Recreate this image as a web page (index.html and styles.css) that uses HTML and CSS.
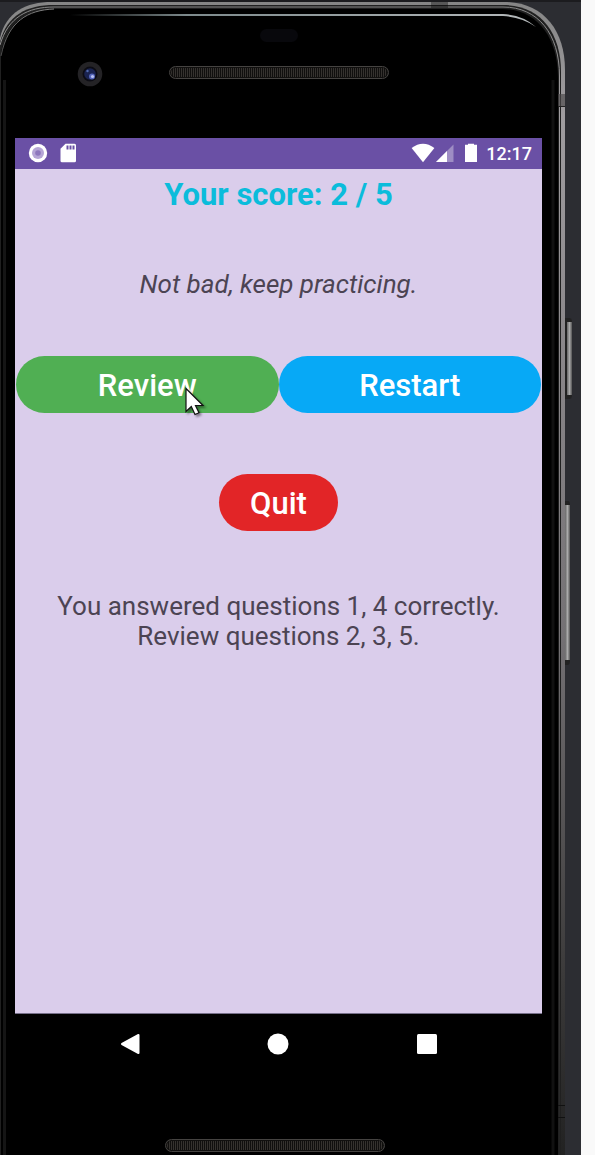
FILE: index.html
```html
<!DOCTYPE html>
<html lang="en">
<head>
<meta charset="utf-8">
<meta name="viewport" content="width=device-width, initial-scale=1">
<title>Quiz results</title>
<link rel="stylesheet" href="styles.css">
</head>
<body>
<div class="stage">
  <svg class="frame" viewBox="0 0 595 1155" preserveAspectRatio="none" aria-hidden="true">
    <defs>
      <linearGradient id="metal" gradientUnits="userSpaceOnUse" x1="0" y1="0" x2="0" y2="1155">
        <stop offset="0" stop-color="#858585"/>
        <stop offset=".1" stop-color="#a09da0"/>
        <stop offset=".3" stop-color="#8a878a"/>
        <stop offset=".55" stop-color="#747174"/>
        <stop offset=".85" stop-color="#3a3939"/>
        <stop offset="1" stop-color="#222"/>
      </linearGradient>
      <linearGradient id="fade" gradientUnits="userSpaceOnUse" x1="0" y1="0" x2="0" y2="130">
        <stop offset="0" stop-color="#888"/>
        <stop offset=".3" stop-color="#666"/>
        <stop offset=".6" stop-color="#222"/>
        <stop offset="1" stop-color="#0a0a0a"/>
      </linearGradient>
      <linearGradient id="shine" gradientUnits="userSpaceOnUse" x1="70" y1="0" x2="536" y2="0">
        <stop offset="0" stop-color="#000"/>
        <stop offset=".25" stop-color="#7d8a8c"/>
        <stop offset="1" stop-color="#b5b9bb"/>
      </linearGradient>
      <linearGradient id="key" x1="0" y1="0" x2="1" y2="0">
        <stop offset="0" stop-color="#666"/>
        <stop offset=".5" stop-color="#aaa"/>
        <stop offset="1" stop-color="#555"/>
      </linearGradient>
    </defs>
    <rect width="581" height="1155" fill="#2c2d32"/>
    <rect width="581" height="2" fill="#1c1c1f"/>
    <path d="M565 318h4q3 0 3 4v73q0 4-3 4h-4z" fill="#222"/>
    <rect x="567" y="322" width="5" height="73" fill="url(#key)"/>
    <path d="M565 501h3q2 0 2 4v156q0 3-2 4h-3z" fill="#222"/>
    <rect x="565" y="505" width="5" height="155" fill="url(#key)"/>
    <path d="M0 1155V38C6 12 26 2 52 2H504C543 2 565 30 565 70V1155z" fill="url(#metal)"/>
    <path d="M0 1155V42C7 15 27 5 54 5H503C540 5 561 32 561 72V1155z" fill="#202020"/>
    <path d="M0 45C8 17 28 7 54 7H503C538 7 559.500 34 559.500 76V1155" fill="none" stroke="url(#metal)"/>
    <path d="M1 1155V52C9 20 28 9 56 9H502C536 9 558 36 558 78V1155z" fill="#000"/>
    <path d="M1 56C8 21 28 10 54 9" fill="none" stroke="url(#fade)"/>
    <path d="M4.500 1155V80" fill="none" stroke="#151515" stroke-width="3"/>
    <path d="M553 80V1155" fill="none" stroke="#111" stroke-width="3"/>
    <path d="M70 14H503Q523 15 536 27Q522 17 503 16H70z" fill="url(#shine)"/>
    <path d="M431 2h17v6h-17z" fill="#000" opacity=".35"/>
    <path d="M558 94h7v13h-7z" fill="#4a4648" opacity=".65"/>
    <path d="M558 106.500h7" stroke="#222"/>
    <path d="M558 1105.500h7M558 1117.500h7" stroke="#111"/>
  </svg>

  <div class="phone">
    <div class="bezel-top">
      <span class="sensor"></span>
      <div class="hardware">
        <svg class="camera" viewBox="0 0 26 26" aria-hidden="true">
          <circle cx="13" cy="13" r="12.300" fill="#242326"/>
          <circle cx="13" cy="13" r="7.500" fill="#0c0c14"/>
          <circle cx="13" cy="13" r="5.800" fill="#1a2350"/>
          <circle cx="10.500" cy="10" r="1.200" fill="#5069b0"/>
          <circle cx="15" cy="15.500" r="3" fill="#5464b8"/>
          <circle cx="15.500" cy="15.500" r="1.600" fill="#b9c2f3"/>
        </svg>
        <span class="grille"></span>
      </div>
    </div>

    <div class="screen">
      <header class="status">
        <svg class="glyph" viewBox="0 0 20 20" aria-hidden="true">
          <circle cx="10" cy="10" r="9.200" fill="#fff"/>
          <circle cx="10" cy="10" r="6" fill="#b5a5d6"/>
          <circle cx="10" cy="10" r="2.800" fill="#8e78bd"/>
        </svg>
        <svg class="glyph" viewBox="0 0 20 20" aria-hidden="true">
          <path d="M7.500 .7H16.500Q18 .7 18 2.200V17.800Q18 19.300 16.500 19.300H4Q2.500 19.300 2.500 17.800V5.700z" fill="#fff"/>
          <path d="M8.500 2.500h2v4h-2zM11.500 2.500h2v4h-2zM14.500 2.500h2v4h-2z" fill="#6a50a5"/>
        </svg>
        <div class="system">
          <svg class="wifi" viewBox="0 0 24 20" aria-hidden="true">
            <path d="M.6 5Q12-3.600 23.400 5L12 19.300z" fill="#fff"/>
          </svg>
          <svg class="glyph" viewBox="0 0 20 20" aria-hidden="true">
            <path d="M1 19 18.500 1.500V19z" fill="#fff" opacity=".35"/>
            <path d="M1 19 12 8V19z" fill="#fff"/>
          </svg>
          <svg class="battery" viewBox="0 0 14 20" aria-hidden="true">
            <path d="M4 .8h6v1h3V19H1V1.800h3z" fill="#fff"/>
          </svg>
          <time class="clock">12:17</time>
        </div>
      </header>

      <main class="results">
        <h1 class="score">Your score: 2 / 5</h1>
        <p class="verdict">Not bad, keep practicing.</p>
        <div class="actions">
          <button class="btn btn-review" type="button">Review<svg class="pointer" viewBox="0 0 24 32" aria-hidden="true"><path d="M2 1.500V24.500L7.300 19.500 11 27.500 15 25.700 11.500 18.500H19z" fill="#fff" stroke="#111" stroke-width="1.200"/></svg></button>
          <button class="btn btn-restart" type="button">Restart</button>
        </div>
        <button class="btn btn-quit" type="button">Quit</button>
        <p class="summary">You answered questions 1, 4 correctly.<br>Review questions 2, 3, 5.</p>
      </main>
    </div>

    <nav class="navbar">
      <button class="nav-key" type="button" aria-label="Back">
        <svg viewBox="0 0 24 24"><path d="M20.500 3V21L4 12z" fill="#fff" stroke="#fff" stroke-width="2" stroke-linejoin="round"/></svg>
      </button>
      <button class="nav-key" type="button" aria-label="Home">
        <svg viewBox="0 0 24 24"><circle cx="12" cy="12" r="10.500" fill="#fff"/></svg>
      </button>
      <button class="nav-key" type="button" aria-label="Overview">
        <svg viewBox="0 0 24 24"><rect x="2" y="2" width="20" height="20" rx="1.500" fill="#fff"/></svg>
      </button>
    </nav>

    <div class="bezel-bottom"><span class="grille"></span></div>
  </div>
</div>
</body>
</html>
```

FILE: styles.css
```css
* {
  box-sizing: border-box;
}

body {
  margin: 0;
  background: #f9f9f9;
  font-family: Roboto, "Liberation Sans", sans-serif;
}

.stage {
  position: relative;
  min-height: 100vh;
  display: flex;
}

.frame {
  position: absolute;
  inset: 0;
  width: 100%;
  height: 100%;
}

.phone {
  position: relative;
  flex: 1;
  display: flex;
  flex-direction: column;
  margin: 0 53px 0 15px;
}

.bezel-top {
  display: flex;
  flex-direction: column;
  align-items: center;
  gap: 19px;
  padding: 29px 0 51px;
}

.sensor {
  width: 38px;
  height: 13px;
  border-radius: 7px;
  background: #08080c;
}

.hardware {
  align-self: stretch;
  display: grid;
  grid-template-columns: 1fr 220px 1fr;
  align-items: center;
}

.camera {
  justify-self: center;
  width: 26px;
  height: 26px;
  margin-right: 4px;
}

.grille {
  width: 220px;
  height: 13px;
  border: 1px solid #454341;
  border-radius: 7px;
  background: repeating-linear-gradient(90deg, #100f0e 0 1px, #35322f 1px 2px);
  box-shadow: inset 0 0 0 1px #11100f;
}

.hardware .grille {
  margin-bottom: 4px;
}

.screen {
  flex: 1;
  display: flex;
  flex-direction: column;
  background: #dacdeb;
  border-bottom: 1px solid #77708a;
}

.status {
  display: flex;
  align-items: center;
  gap: 10px;
  height: 31px;
  padding: 0 10px 1px 13px;
  background: #6a50a5;
  color: #fff;
}

.glyph {
  width: 20px;
  height: 20px;
}

.system {
  display: flex;
  align-items: center;
  margin-left: auto;
}

.wifi {
  width: 24px;
  height: 20px;
}

.battery {
  width: 14px;
  height: 20px;
  margin: 0 8px 0 9px;
}

.clock {
  padding-top: 1px;
  font-size: 18px;
  line-height: 20px;
  font-weight: 500;
}

.results {
  display: flex;
  flex-direction: column;
  align-items: center;
  padding: 8px 1px;
  color: #4c4453;
  text-align: center;
}

.score {
  margin: 0 0 53px;
  color: #0bbcdb;
  font-size: 31px;
  line-height: 36px;
  font-weight: 700;
}

.verdict {
  margin: 0 0 54px;
  font-size: 26px;
  line-height: 36px;
  font-style: italic;
}

.actions {
  align-self: stretch;
  display: grid;
  grid-template-columns: 1fr 1fr;
  margin-bottom: 61px;
}

.btn {
  position: relative;
  height: 57px;
  padding: 2px 31px 0;
  border: 0;
  border-radius: 29px;
  color: #fff;
  font: 500 31px/36px Roboto, "Liberation Sans", sans-serif;
}

.btn-review {
  background: #50af53;
}

.btn-restart {
  background: #07a9f6;
}

.btn-quit {
  margin-bottom: 60px;
  background: #e22527;
}

.pointer {
  position: absolute;
  top: 31px;
  left: 168px;
  z-index: 1;
  width: 24px;
  height: 32px;
  filter: drop-shadow(2px 2px 1px rgba(0, 0, 0, 0.4));
}

.summary {
  margin: 0;
  font-size: 26px;
  line-height: 30px;
}

.navbar {
  display: grid;
  grid-template-columns: repeat(3, 1fr);
  align-items: center;
  justify-items: center;
  height: 60px;
  padding: 0 41px;
}

.nav-key {
  width: 24px;
  height: 24px;
  padding: 0;
  border: 0;
  background: none;
}

.nav-key svg {
  display: block;
}

.bezel-bottom {
  display: flex;
  justify-content: center;
  padding: 65px 7px 3px 0;
}
```
